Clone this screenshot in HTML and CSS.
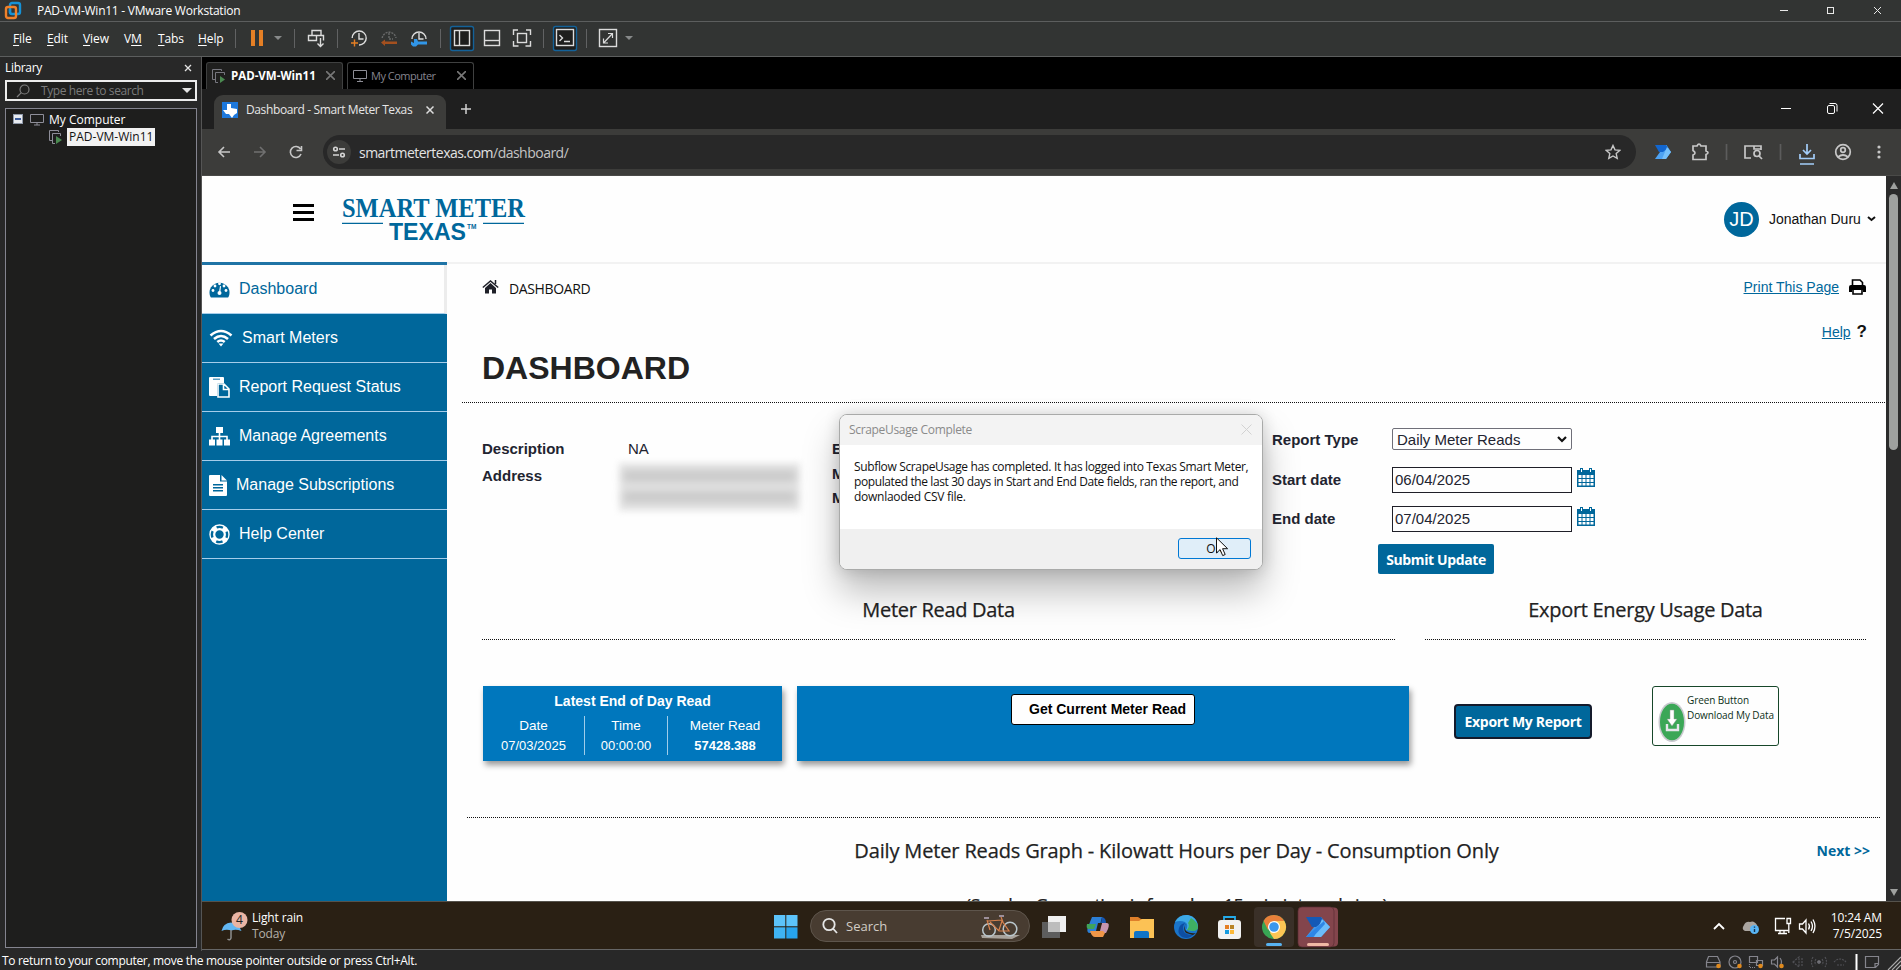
FILE: index.html
```html
<!DOCTYPE html>
<html lang="en">
<head>
<meta charset="utf-8">
<title>PAD-VM-Win11 - VMware Workstation</title>
<link rel="stylesheet" href="styles.css">
</head>
<body>
<header class="titlebar">
  <svg class="vm-logo" width="18" height="20" viewBox="0 0 18 20" fill="none" stroke-width="2.4"><rect x="6" y="2" width="10" height="11" rx="2" stroke="#1592d6"/><rect x="2" y="6" width="10" height="11" rx="2" stroke="#f0812a"/><path d="M6 8v4" stroke="#1592d6"/></svg>
  <span class="app-title">PAD-VM-Win11 - VMware Workstation</span>
  <svg class="win-ctl" width="120" height="20" viewBox="0 0 120 20" fill="none" stroke="#e8e8e8"><path d="M8 9.500h8"/><rect x="55.500" y="6.500" width="6" height="6"/><path d="M102 6l7 7M109 6l-7 7"/></svg>
</header>
<nav class="menubar">
  <span class="menu m-file"><u>F</u>ile</span><span class="menu m-edit"><u>E</u>dit</span><span class="menu m-view"><u>V</u>iew</span><span class="menu m-vm">V<u>M</u></span><span class="menu m-tabs"><u>T</u>abs</span><span class="menu m-help"><u>H</u>elp</span>
  <svg class="tools" width="420" height="34" viewBox="230 22 420 34" fill="none" stroke="#dcdcdc" stroke-width="1.400">
    <g stroke="#616263" stroke-width="1"><path d="M235.500 29v19M294.500 29v19M337.500 29v19M440.500 29v19M543.500 29v19M586.500 29v19"/></g>
    <path d="M251 30h4v16h-4zM259 30h4v16h-4z" fill="#e57f25" stroke="none"/>
    <path d="M274 36h8l-4 4z" fill="#87898a" stroke="none"/><path d="M625 36h8l-4 4z" fill="#87898a" stroke="none"/>
    <path d="M312 30.500h9v5h-9zM308.500 35.500h8v5h-8zM316.500 35.500h7v5M320.500 38v8M317.500 43.500l3 3l3-3"/>
    <path d="M352.200 38A7 7 0 1 1 359 45M359 33v6h4.500"/><path d="M351 43h7M354.500 39.500v7" stroke="#e57f25"/>
    <path d="M382.200 38A7 7 0 0 1 396 38M389 33v6h4" stroke="#686969" stroke-dasharray="2 1"/><path d="M381 42.500l4-3v2h12v2.500h-12v2z" fill="#a4501f" stroke="none"/>
    <path d="M412 39a7 7 0 1 1 14 0M419 33v6h4.500"/><path d="M411 41.500l3 1.500v-4h3l1 2.500h9v3h-9l-2 2h-3l-2-2z" fill="#3196e8" stroke="none"/>
    <rect x="450.500" y="26.500" width="23" height="24" rx="2" fill="#1e1e1d" stroke="#146299"/><rect x="454.500" y="30.500" width="15" height="15"/><path d="M459.500 30v16"/>
    <rect x="484.500" y="30.500" width="15" height="15"/><path d="M484 40.500h16"/>
    <path d="M518 30h-4.500v5M526 30h4.500v5M513.500 41v5h5M530.500 41v5h-5"/><rect x="517.500" y="33.500" width="9" height="9"/>
    <rect x="553.500" y="26.500" width="23" height="24" rx="2" fill="#1e1e1d" stroke="#146299"/><rect x="556.500" y="29.500" width="17" height="16"/><path d="M559.500 35l3 3l-3 3M564 41.500h6"/>
    <rect x="599.500" y="29.500" width="17" height="17"/><path d="M608 33.500h4.500v4.500M603.500 38.500v4.500h4.500M612 34L604 42.500" stroke-width="1.200"/>
  </svg>
</nav>
<div class="workspace">
  <aside class="library">
    <div class="lib-head"><span>Library</span><svg width="8" height="8" viewBox="0 0 8 8" stroke="#e4e4e4" stroke-width="1.300"><path d="M1 1l6 6M7 1L1 7"/></svg></div>
    <div class="lib-search"><svg width="14" height="14" viewBox="0 0 14 14" fill="none" stroke="#7d7d7d" stroke-width="1.200"><circle cx="8.500" cy="5.500" r="4.500"/><path d="M5.300 8.700L1 13"/></svg><span>Type here to search</span><i class="caret"></i></div>
    <div class="tree">
      <div class="node"><b class="minus"></b><svg width="16" height="13" viewBox="0 0 16 13" fill="none" stroke="#8e8e99"><path d="M1.500 1.500h13v8h-13zM8 10v2M5 12h6"/></svg><span>My Computer</span></div>
      <div class="node child"><svg width="14" height="14" viewBox="0 0 14 14" fill="none" stroke="#8e8e99"><path d="M3 10.500H.5V.5h9V2"/><path d="M6 13.500H3.500v-10h8V6"/><path d="M7 6l6 4l-6 4z" fill="#4b8a51" stroke="none"/></svg><span class="selected">PAD-VM-Win11</span></div>
    </div>
  </aside>
  <main class="guest">
    <div class="vmtabs">
      <div class="vmtab active"><svg width="14" height="14" viewBox="0 0 14 14" fill="none" stroke="#77777f"><path d="M3 10.500H.5V.5h9V2"/><path d="M6 13.500H3.500v-10h9V6"/><path d="M8 7l5 3.500l-5 3.500z" fill="#4b8a51" stroke="none"/></svg><span>PAD-VM-Win11</span><svg width="9" height="9" viewBox="0 0 9 9" stroke="#777" stroke-width="1.600"><path d="M0 0l9 9M9 0L0 9"/></svg></div>
      <div class="vmtab"><svg width="14" height="12" viewBox="0 0 14 12" fill="none" stroke="#8e8e96"><path d="M.5 .5h13v8H.5zM7 9v2M4 11.500h6"/></svg><span>My Computer</span><svg width="9" height="9" viewBox="0 0 9 9" stroke="#777" stroke-width="1.600"><path d="M0 0l9 9M9 0L0 9"/></svg></div>
    </div>
    <div class="strip">
      <div class="ctab"><svg width="16" height="16" viewBox="0 0 16 16"><path fill="#1d78dc" d="M0 0h16v16H0z"/><path fill="#fff" d="M5 2h4v4l6 1v4l-3 2-2 3-3-4-3 0-3-4h4z"/></svg><span>Dashboard - Smart Meter Texas</span><svg width="8" height="8" viewBox="0 0 8 8" stroke="#ddd" stroke-width="1.500"><path d="M.5 .5l7 7M7.500 .5l-7 7"/></svg></div>
      <svg class="plus" width="10" height="10" viewBox="0 0 10 10" stroke="#d2d2d2" stroke-width="1.500"><path d="M5 0v10M0 5h10"/></svg>
      <svg class="cctl" width="110" height="20" viewBox="0 0 110 20" fill="none" stroke="#fff"><path d="M1 9.500h10"/><rect x="47.500" y="6.500" width="7" height="8" rx="1.500"/><path d="M49.500 4.500h5.500q2 0 2 2v6"/><path d="M93 4.500l10 10M103 4.500l-10 10" stroke-width="1.200"/></svg>
    </div>
    <div class="ctoolbar">
      <svg class="nav" width="90" height="20" viewBox="216 142 90 20" fill="none" stroke="#c7c7c7" stroke-width="1.600"><path d="M230 152h-11M224 147l-5 5l5 5"/><path d="M254 152h11M260 147l5 5l-5 5" stroke="#707070"/><path d="M300.500 149a5.500 5.500 0 1 0 .5 5M301.500 146v4.500h-5"/></svg>
      <div class="omni"><div class="site"><svg width="14" height="14" viewBox="0 0 14 14" fill="none" stroke="#d5d5d5" stroke-width="1.600"><circle cx="3.500" cy="4" r="1.800"/><path d="M7 4h6M1 10h6"/><circle cx="10.500" cy="10" r="1.800"/></svg></div><span class="url"><span class="host">smartmetertexas.com</span><span class="path">/dashboard/</span></span>
      <svg class="star" width="16" height="16" viewBox="0 0 16 16" fill="none" stroke="#c7c7c7" stroke-width="1.400"><path d="M8 1.500l2 4.400 4.700.5-3.500 3.200 1 4.800L8 12l-4.200 2.400 1-4.800L1.300 6.400 6 5.900z"/></svg></div>
      <svg class="ext" width="245" height="30" viewBox="1650 137 245 30" fill="none" stroke="#c7c7c7" stroke-width="1.700">
        <path d="M1665 145h1.500l4.500 7l-5 7h-11l5-7z" fill="#4ea3f3" stroke="none"/><path d="M1655 145h11l2 3l-5 4h-4z" fill="#1266cf" stroke="none"/><path d="M1667 147l4 5l-5 7h-4z" fill="#76c1fb" stroke="none"/>
        <path d="M1693 146h4q2-4 4 0h5v5q4 1.500 0 3.500v5h-13v-4.500q4-2 0-4.500z"/>
        <path d="M1726.500 144v16M1780.500 144v16" stroke="#5c5c5c"/>
        <path d="M1751 158h-6v-12h16v4M1754 146v3h7"/><circle cx="1757" cy="153.500" r="3"/><path d="M1759 156l3 3"/>
        <path d="M1807 144v9M1803 150l4 4l4-4M1800 154v4.500h14v-4.500M1800 164h14" stroke="#a3cdf9"/>
        <circle cx="1843" cy="152" r="7.300"/><circle cx="1843" cy="150" r="2.300"/><path d="M1838 157q5-4 10 0"/>
        <g fill="#c7c7c7" stroke="none"><circle cx="1879" cy="147" r="1.600"/><circle cx="1879" cy="152" r="1.600"/><circle cx="1879" cy="157" r="1.600"/></g>
      </svg>
    </div>
    <div class="viewport">
      <div class="page">
        <div class="site-head">
          <svg class="burger" width="21" height="18" viewBox="0 0 21 18"><path d="M0 0h21v3H0zM0 7h21v3H0zM0 14h21v3H0z"/></svg>
          <svg class="brand" width="186" height="46" viewBox="342 196 186 46"><g fill="#00679b"><text x="342" y="217" class="brand-a" textLength="183" lengthAdjust="spacingAndGlyphs">SMART METER</text><text x="389" y="240" class="brand-b" textLength="77" lengthAdjust="spacingAndGlyphs">TEXAS</text><text x="467" y="229" class="brand-c">TM</text><path d="M342 222.700h41v1.300h-41zM483 222.700h41v1.300h-41z"/></g></svg>
          <div class="user"><div class="avatar">JD</div><span class="uname">Jonathan Duru</span><svg width="9" height="6" viewBox="0 0 9 6" fill="none" stroke="#111" stroke-width="2"><path d="M1 1l3.500 3L8 1"/></svg></div>
        </div>
        <div class="site-body">
          <nav class="side">
            <a class="item on"><svg width="21" height="18" viewBox="0 0 21 18"><path fill="#00679b" d="M1.500 17A10 10 0 1 1 19.500 17Q19 17.500 18.500 17.500H2.500Q2 17.500 1.500 17z"/><g fill="#fff"><circle cx="4" cy="10.500" r="1.400"/><circle cx="6" cy="6" r="1.400"/><circle cx="10.500" cy="3.800" r="1.400"/><circle cx="15" cy="6" r="1.400"/><circle cx="17" cy="10.500" r="1.400"/><circle cx="10.500" cy="13" r="2"/><path d="M10 12l1-6 1 .3-.7 6z"/></g></svg><span>Dashboard</span></a>
            <a class="item"><svg width="24" height="18" viewBox="0 0 24 18" fill="none" stroke="#fff" stroke-width="2.600"><path d="M1.500 6.500q10.500-9 21 0M5 10q7-6 14 0M8.300 13q3.700-3 7.400 0"/><path d="M9.500 14.500h5L12 17.500z" fill="#fff" stroke="none"/></svg><span>Smart Meters</span></a>
            <a class="item"><svg width="21" height="21" viewBox="0 0 21 21"><path fill="#fff" d="M1 0h13q1 0 1 1v5h-5q-2 0-2 2v11H1q-1 0-1-1V1q0-1 1-1z"/><path fill="#5f9fc2" d="M4 1.500h7V3H4z"/><path d="M9 7h6l5 5v8H9zM14.500 7v5.500H20" fill="#00679b" stroke="#fff" stroke-width="1.600"/></svg><span>Report Request Status</span></a>
            <a class="item"><svg width="21" height="19" viewBox="0 0 21 19" fill="#fff"><path d="M7 0h7v6H7zM0 12.500h6v6H0zM7.500 12.500h6v6h-6zM15 12.500h6v6h-6z"/><path d="M3 13V9.500h15V13M10.500 5v8" fill="none" stroke="#fff" stroke-width="1.600"/></svg><span>Manage Agreements</span></a>
            <a class="item"><svg width="18" height="21" viewBox="0 0 18 21"><path fill="#fff" d="M1 0h10v6.500h7V20q0 1-1 1H1q-1 0-1-1V1q0-1 1-1zM12.500 0L18 5.500h-5.500z"/><path fill="#00679b" d="M4 9h10v1.400H4zM4 12h10v1.400H4zM4 15h10v1.400H4z"/></svg><span>Manage Subscriptions</span></a>
            <a class="item"><svg width="21" height="21" viewBox="0 0 21 21" fill="none"><circle cx="10.500" cy="10.500" r="7.200" stroke="#fff" stroke-width="6"/><circle cx="10.500" cy="10.500" r="7.600" stroke="#00679b" stroke-width="2.400" stroke-dasharray="6.500 5.440" stroke-dashoffset="3.200"/></svg><span>Help Center</span></a>
          </nav>
          <section class="content">
            <div class="crumbs"><svg width="17" height="14" viewBox="0 0 17 14" fill="#1f2028"><path d="M8.500 3L14 8v5.500H10V9.500H7v4H3V8z"/><path d="M.8 7.500L8.500 1l7.700 6.500M13.500 0v4" fill="none" stroke="#1f2028" stroke-width="1.500"/></svg><span class="crumb">DASHBOARD</span>
              <span class="print"><a class="lnk">Print This Page</a><svg width="17" height="16" viewBox="0 0 17 16"><path d="M3.500 6V1h7.500l2.500 2.500V6" fill="none" stroke="#000" stroke-width="1.600"/><path d="M2 6h13q2 0 2 2v5h-3v-2H3v2H0V8q0-2 2-2z"/><path d="M4 11v4h9v-4" fill="none" stroke="#000" stroke-width="1.600"/></svg></span></div>
            <div class="helprow"><a class="lnk">Help</a><b>?</b></div>
            <h1>DASHBOARD</h1>
            <div class="dots d1"></div>
            <div class="details">
              <dl class="meta"><div><dt>Description</dt><dd>NA</dd></div><div><dt>Address</dt><dd><span class="redacted"><i></i><i></i></span></dd></div></dl>
              <dl class="ids"><dt>E</dt><dt>M</dt><dt>M</dt></dl>
              <form class="report">
                <div class="fr r1"><label>Report Type</label><div class="select"><span>Daily Meter Reads</span><svg width="10" height="7" viewBox="0 0 10 7" fill="none" stroke="#111" stroke-width="2.200"><path d="M1 1l4 4 4-4"/></svg></div></div>
                <div class="fr r2"><label>Start date</label><div class="input"><span>06/04/2025</span></div><svg class="cal" width="18" height="19" viewBox="0 0 18 19"><path fill="#00679b" d="M0 2h18v17H0zM3 0h3v4H3zM12 0h3v4h-3z"/><path fill="#fff" d="M1.500 7h3v3h-3zM5.500 7h3v3h-3zM9.500 7h3v3h-3zM13.500 7h3v3h-3zM1.500 11h3v3h-3zM5.500 11h3v3h-3zM9.500 11h3v3h-3zM13.500 11h3v3h-3zM1.500 15h3v2.500h-3zM5.500 15h3v2.500h-3zM9.500 15h3v2.500h-3zM13.500 15h3v2.500h-3zM4 1h1v3H4zM13 1h1v3h-1z"/></svg></div>
                <div class="fr r3"><label>End date</label><div class="input"><span>07/04/2025</span></div><svg class="cal" width="18" height="19" viewBox="0 0 18 19"><path fill="#00679b" d="M0 2h18v17H0zM3 0h3v4H3zM12 0h3v4h-3z"/><path fill="#fff" d="M1.500 7h3v3h-3zM5.500 7h3v3h-3zM9.500 7h3v3h-3zM13.500 7h3v3h-3zM1.500 11h3v3h-3zM5.500 11h3v3h-3zM9.500 11h3v3h-3zM13.500 11h3v3h-3zM1.500 15h3v2.500h-3zM5.500 15h3v2.500h-3zM9.500 15h3v2.500h-3zM13.500 15h3v2.500h-3zM4 1h1v3H4zM13 1h1v3h-1z"/></svg></div>
                <div class="submit">Submit Update</div>
              </form>
            </div>
            <div class="heads"><h2 class="h-read"><span>Meter Read Data</span></h2><h2 class="h-export"><span>Export Energy Usage Data</span></h2></div>
            <div class="cards">
              <div class="card latest"><div class="ctitle">Latest End of Day Read</div><div class="cols"><div class="c1"><span>Date</span><span>07/03/2025</span></div><div class="c2"><span>Time</span><span>00:00:00</span></div><div class="c3"><span>Meter Read</span><b>57428.388</b></div></div></div>
              <div class="card current"><div class="getread">Get Current Meter Read</div></div>
              <div class="export">Export My Report</div>
              <div class="green"><svg width="28" height="42" viewBox="0 0 28 42"><ellipse cx="14" cy="21" rx="13.500" ry="20" fill="#c9c9cf"/><ellipse cx="14" cy="21" rx="12" ry="18.300" fill="#3ba757"/><path d="M12 9h4v9h3l-5 7-5-7h3z" fill="#fff" stroke="#8e9a92" stroke-width=".5"/><path d="M9 23v6h11v-6" fill="none" stroke="#e6e6ec" stroke-width="2.400"/></svg><div class="gtext"><span class="g1">Green Button</span><span class="g2">Download My Data</span></div></div>
            </div>
            <div class="dots d2"></div>
            <div class="graph"><h2><span>Daily Meter Reads Graph - Kilowatt Hours per Day - Consumption Only</span></h2><b class="next">Next &gt;&gt;</b></div>
            <div class="note"><span>(Surplus Generation is found on 15 min interval view)</span></div>
          </section>
        </div>
      </div>
      <div class="scroll"><i class="up"></i><i class="thumb"></i><i class="down"></i></div>
    </div>
    <footer class="taskbar">
      <div class="weather"><svg width="30" height="32" viewBox="220 906 30 32"><path d="M221.500 927Q223 919 231 918.500Q239 919 241.500 927Q236 925 231.500 926.500Q226 925 221.500 927z" fill="#62b7f3"/><path d="M231 926v8q-1 3-3.500 1" fill="none" stroke="#8d8d8d" stroke-width="1.500"/><circle cx="239.500" cy="916" r="8" fill="#eab5a4"/><text x="239.500" y="920.200" class="badge" text-anchor="middle">4</text></svg><div class="wtext"><span>Light rain</span><span class="dim">Today</span></div></div>
      <svg class="start" width="24" height="24" viewBox="0 0 24 24"><path fill="#5cc3fa" d="M0 0h11.300v11.300H0zM12.300 0H23.500v11.300H12.300z"/><path fill="#3fb3f3" d="M0 12.300h11.300V23.500H0z"/><path fill="#27a3ec" d="M12.300 12.300H23.500V23.500H12.300z"/></svg>
      <div class="search"><svg width="16" height="18" viewBox="0 0 16 18" fill="none" stroke="#e6e6e6" stroke-width="1.800"><circle cx="7" cy="7.500" r="5.700"/><path d="M11 11.500l4 4.500"/></svg><span>Search</span><svg class="bike" width="44" height="26" viewBox="982 914 44 26" fill="none"><path d="M983 936h39l-8 4-30-1z" fill="#a9a39c"/><g stroke="#b9c6cc" stroke-width="1.500"><circle cx="991" cy="931" r="6.300"/><circle cx="1012" cy="930" r="6.800"/></g><path d="M989 921l3 10M990 922l14-1M992 923l9 9h10l-7-10l-3 9M1003 918l2 5" stroke="#d8824e" stroke-width="1.200"/><path d="M1001 917h5M986 919h5" stroke="#9c8f9a" stroke-width="2"/></svg></div>
      <svg class="apps" width="310" height="46" viewBox="1036 902 310 46">
        <path fill="#5d5d5d" d="M1042 921h18v16h-18z"/><path fill="#f0f0f0" d="M1048 915h18v16h-18z"/><path fill="#bdbdbd" d="M1048 921h12v10h-12z"/>
        <path d="M1092 916h10l-2 8-2 8h-8q-4 0-2-6z" fill="#2c7fd6"/><path d="M1087 923h9l-2 5h-6q-2-1-1-5z" fill="#3fa35a"/><path d="M1102 916q4 1 4 6h-5z" fill="#1456b5"/><path d="M1102 922h5q3 0 1 6l-2 4h-9z" fill="#c695b0"/><path d="M1090 930h13l2 2-2 4h-8q-3 0-5-6z" fill="#ef9648"/><path d="M1096 930l2-8h4l-2 8z" fill="#2a2014"/>
        <path d="M1130 916h8l3 2h12v5h-23z" fill="#df7f2a"/><path d="M1130 920h9l3-2h12v19h-24z" fill="#fcc255"/><path d="M1134 937v-5q0-2 2-2h11q2 0 2 2v5z" fill="#1174c6"/>
        <circle cx="1186" cy="926" r="12" fill="#1a74c9"/><path d="M1175 921q4-8 13-7q10 2 10 13l-4 3-8-1q3-5-1-8-5-2-10 0z" fill="#3da9e6"/><path d="M1191 917q7 4 7 10-1 3-5 3l-6-1q3-4 1-7z" fill="#3fb163"/><path d="M1185 922q-4 5 0 10 4 3 9 1-5 6-12 3-5-3-3-9 1-4 6-5z" fill="#0d4ea3"/><path d="M1187 922q-4 3-1 8 4 3 10 2l-3 2-7-2q-4-5 1-10z" fill="#2a2014"/>
        <path d="M1224 921v-5h11v5" fill="none" stroke="#24abe9" stroke-width="1.800"/><rect x="1218" y="919" width="23" height="19" rx="3" fill="#f2f2f2"/><path fill="#e57f25" d="M1225 924h4v4h-4z"/><path fill="#b88428" d="M1230 924h4v4h-4z"/><path fill="#159be0" d="M1225 929h4v4h-4z"/><path fill="#fcb93a" d="M1230 929h4v4h-4z"/>
        <rect x="1254" y="906" width="40" height="40" rx="4" fill="#3a3028"/><circle cx="1274" cy="926" r="12" fill="#38a554"/><path d="M1284.400 920A12 12 0 0 1 1274 938L1270 932L1274 920z" fill="#fdc554"/><path d="M1263.600 920A12 12 0 0 1 1284.400 920H1274L1268 929z" fill="#e8803a"/><circle cx="1274" cy="926" r="6" fill="#fff"/><circle cx="1274" cy="926" r="4.800" fill="#3a97ee"/><rect x="1266" y="942" width="16" height="3" rx="1.500" fill="#58b2f0"/>
        <rect x="1302" y="906.500" width="36" height="39" rx="4" fill="#83454c"/><rect x="1298" y="906" width="36" height="40" rx="4" fill="#83454c" stroke="#5a2c33" stroke-width=".7"/><path d="M1320 916h1l9 10-9 10h-15l8-10z" fill="#3f96ec"/><path d="M1306 916h15l3 4-8 6h-4z" fill="#1459b6"/><path d="M1322 918l8 8-9 10h-7z" fill="#6cbcfa"/><path d="M1324 920l-18 16h7l12-13z" fill="#2e86e6"/><rect x="1307" y="942" width="22" height="3" rx="1.500" fill="#f0b8a4"/>
      </svg>
      <svg class="tray" width="110" height="24" viewBox="1710 914 110 24" fill="none" stroke="#fff" stroke-width="1.300"><path d="M1714 929l5-5l5 5" stroke-width="1.800"/><path d="M1745 931q-4-2-1-6q2-4 6-3q4-2 7 3q2 4-1 6z" fill="#aaa5a0" stroke="none"/><circle cx="1754.500" cy="929.500" r="4.500" fill="#58b5f5" stroke="none"/><path d="M1754.500 929v3M1754.500 926.500v1.200" stroke="#17324d" stroke-width="1.400"/><path d="M1785 918.500h-9.500v12h13M1778 933.500h9M1780 931v2M1784 931v2"/><path d="M1787 918.500h3.500v5h-3.500zM1788.800 924v9"/><path d="M1799.500 924h3l3.500-4v13l-3.500-4h-3zM1808.500 923.500q2 3 0 6M1811 921.500q3 5 0 9.500M1813 919.500q4 7 0 13.500"/></svg>
      <div class="clock"><span>10:24 AM</span><span>7/5/2025</span></div>
    </footer>
  </main>
</div>
<div class="status"><span>To return to your computer, move the mouse pointer outside or press Ctrl+Alt.</span>
  <svg width="200" height="19" viewBox="1701 951 200 19" fill="none" stroke="#85858d" stroke-width="1.200"><path d="M1706.500 962l2-5.500h9l2.500 5.500v5h-13.500zM1706.500 962.500h13"/><circle cx="1735" cy="962" r="6"/><circle cx="1735" cy="962" r="1.500"/><path d="M1749.500 956.500h8v6h-8zM1756.500 960.500h6v5h-6z"/><path d="M1749.500 964v3.500h6" stroke-dasharray="1 1"/><path d="M1771.500 960h3l3-3v10l-3-3h-3zM1780 958q3 4 0 8"/><g stroke="#515156" stroke-dasharray="2 1"><path d="M1793 962l6-5v10zM1802 958v8"/><path d="M1813 957q-3 5 0 10M1825 957q3 5 0 10M1816 959q-2 3 0 6M1822 959q2 3 0 6"/><path d="M1834 962q6-6 12 0M1837 965h7"/></g><circle cx="1819" cy="962" r="1.200"/><path d="M1856.500 954v16" stroke="#fff" stroke-width="2"/><path d="M1865.500 956.500h13v8l-3 3h-10zM1875 967v-3.500h4"/><g fill="#e08a1e" stroke="none"><circle cx="1718.500" cy="966" r="2.300"/><circle cx="1739.500" cy="966" r="2.300"/><circle cx="1760.500" cy="966" r="2.300"/><circle cx="1781.500" cy="966" r="2.300"/></g><path d="M1888 970l13-13M1892 970l9-9M1896 970l5-5" stroke="#aaa"/></svg>
</div>
<div class="dialog">
  <div class="dlg-head"><span>ScrapeUsage Complete</span><svg width="11" height="11" viewBox="0 0 11 11" stroke="#d2d2d2"><path d="M.5 .5l10 10M10.500 .5l-10 10"/></svg></div>
  <div class="dlg-body"><p class="p1">Subflow ScrapeUsage has completed. It has logged into Texas Smart Meter,</p><p class="p2">populated the last 30 days in Start and End Date fields, ran the report, and</p><p class="p3">downlaoded CSV file.</p></div>
  <div class="dlg-foot"><div class="ok">OK</div></div>
</div>
<svg class="cursor" width="13" height="20" viewBox="0 0 13 20"><path d="M.5 .8V16l3.600-3.400 2.600 6 2.500-1.100-2.600-5.800h5z" fill="#fff" stroke="#111"/></svg>
</body>
</html>
```
FILE: styles.css
```css
*{box-sizing:border-box;margin:0;padding:0}
body{width:1901px;height:970px;overflow:hidden;background:#282828;display:flex;flex-direction:column;font-family:"Open Sans","Noto Sans",sans-serif;font-size:12px;color:#fff;position:relative;white-space:nowrap}
svg{display:block;flex:none}
.titlebar{height:22px;background:#323433;border-bottom:1px solid #5c5e5e;display:flex;align-items:center;padding-left:4px}
.app-title{margin-left:15px;letter-spacing:-.24px;flex:1;padding-bottom:1px}
.win-ctl{margin-right:9px}
.menubar{height:35px;background:#323433;border-bottom:1px solid #5c5e5e;display:flex;align-items:center;padding-left:13px}
.menu{letter-spacing:-.1px;padding-bottom:2px}
.menu u{text-underline-offset:2px}
.m-file{width:34px}.m-edit{width:36px}.m-view{width:41px}.m-vm{width:34px}.m-tabs{width:40px}.m-help{width:32px}
.workspace{height:894px;display:flex}
.library{width:202px;border-right:1px solid #555;padding:0 4px 3px 5px;display:flex;flex-direction:column;background:#282828}
.lib-head{height:23px;display:flex;justify-content:space-between;align-items:center;padding:0 5px 2px 0;letter-spacing:-.3px}
.lib-search{height:21px;border:2px solid #ececec;background:#1f1f1e;display:flex;align-items:center;padding:0 3px 0 9px;color:#7b7b7b;margin-bottom:7px}
.lib-search span{margin-left:11px;flex:1;letter-spacing:-.42px}
.caret{border:5px solid transparent;border-top:5px solid #e4e4e4;border-bottom:0}
.tree{flex:1;border:1px solid #84848f;background:#1e1e1d;padding-top:1px}
.node{height:18px;display:flex;align-items:center;padding-left:7px}
.node svg{margin:0 4px 0 6px}
.minus{width:10px;height:10px;background:#e8ebf0;border:1px solid #8f99a9;display:flex;align-items:center;justify-content:center}
.minus::after{content:"";width:6px;height:2px;background:#3b5c9c}
.node.child{padding-left:37px}
.node.child svg{margin-right:4px}
.selected{background:#f2f2f2;color:#111;height:18px;line-height:17px;padding:0 2px}
.guest{flex:1;display:flex;flex-direction:column;min-width:0}
.vmtabs{height:32px;background:#000;display:flex;padding:5px 0 0 4px;gap:4px}
.vmtab{width:137px;border:1px solid #3f4040;border-bottom:0;border-radius:3px 3px 0 0;display:flex;align-items:center;padding:0 7px 1px 5px;color:#85858f}
.vmtab span{flex:1;margin-left:5px;font-size:11.500px}
.vmtab:nth-child(2){width:127px}
.vmtab:nth-child(2) span{font-size:11px;letter-spacing:-.5px;margin-left:4px}
.vmtab.active{background:#1f1f1e;color:#fff;font-weight:700}
.strip{height:40px;background:#1f1f1f;display:flex;align-items:center;padding-left:12px}
.ctab{width:232px;height:34px;margin-top:6px;background:#3c3c3a;border-radius:9px 9px 0 0;display:flex;align-items:center;padding:0 12px 5px 8px;color:#e6e6e6}
.ctab span{flex:1;margin-left:8px;letter-spacing:-.38px}
.plus{margin-left:15px}
.cctl{margin-left:auto;margin-right:11px}
.ctoolbar{height:47px;background:#3c3c3a;border-bottom:1px solid #4a4a48;display:flex;align-items:center;padding-left:14px}
.omni{margin-left:17px;width:1313px;height:34px;border-radius:17px;background:#282828;display:flex;align-items:center;padding:0 15px 0 4px}
.site{width:24px;height:24px;border-radius:50%;background:#3c3c3a;display:grid;place-items:center}
.url{margin-left:8px;font-size:14px;color:#e3e3e3;letter-spacing:-.52px}
.path{color:#c4c4c4}
.star{margin-left:auto}
.ext{margin-left:14px}
.viewport{height:725px;display:flex;background:#fff}
.page{flex:1;display:flex;flex-direction:column;background:#fefefe;color:#222430;overflow:hidden;font-family:"Liberation Sans",Arial,sans-serif}
.site-head{height:86px;flex:none;display:flex;align-items:flex-start;padding:20px 10px 0 91px}
.burger{margin-top:8px}
.brand{margin-left:28px;overflow:visible}
.brand-a{font:700 27px "Liberation Serif",serif}
.brand-b{font:700 24px "Liberation Sans",sans-serif}
.brand-c{font:700 6.500px "Liberation Sans",sans-serif}
.user{margin-left:auto;display:flex;align-items:center;height:36px;margin-top:5px}
.avatar{width:35px;height:35px;border-radius:50%;background:#00679b;color:#fff;font-size:20px;display:grid;place-items:center}
.uname{margin:0 6px 0 10px;font-size:14px;color:#111;width:92px}
.site-body{height:639px;display:flex}
.side{width:245px;background:#00679b;border-top:3px solid #1f74a6;font-size:16px}
.item{height:49px;border-bottom:1px solid #a5cdea;color:#fff;display:flex;align-items:center;padding-left:7px}
.item span{margin-left:9px}
.item.on{background:#fefefe;color:#00679b;border-right:3px solid #ececec}
.content{width:1439px;border-top:2px solid #f2f2f2;display:flex;flex-direction:column;overflow:hidden;font-size:15px}
.content>*{flex:none}
.crumbs{height:44px;display:flex;align-items:center;padding:2px 20px 0 35px}
.crumb{margin-left:10px;padding-top:2px;font:14px "Open Sans","Noto Sans",sans-serif;color:#111;letter-spacing:-.36px}
.print{margin-left:auto;display:flex;align-items:center;gap:10px}
.lnk{color:#00679b;text-decoration:underline;font-size:14px}
.helprow{height:48px;display:flex;align-items:center;justify-content:flex-end;padding-right:19px;gap:6px;color:#111}
.helprow b{font-size:17px}
h1{font-size:32px;line-height:36px;margin:-6px 0 0 35px;height:52px;color:#222}
.dots{height:1px;background:repeating-linear-gradient(90deg,#111 0 1px,transparent 1px 2px)}
.d1{margin:0 0 0 15px}
.details{height:184px;display:flex;padding-left:35px}
.details dt,.details label{font-weight:700}
.meta{width:350px;padding-top:37px}
.meta div{display:flex;height:27px;align-items:flex-start}
.meta dt{width:146px}
.redacted{display:flex;flex-direction:column;gap:9px;width:181px;height:48px;padding:7px 4px;margin:-4px 0 0 -9px;background:#e6e6e6;filter:blur(3px)}
.redacted i{height:12px;background:#c8c8c8;filter:blur(3px)}
.ids{width:440px;padding:37px 0 0}
.ids dt{height:24.500px}
.report{padding-top:25px;width:330px}
.fr{display:flex;align-items:center}
.fr label{width:120px}
.r1{height:22px;margin-bottom:16px}
.r2,.r3{height:27px;margin-bottom:12px}
.select{width:180px;height:22px;border:1px solid #6f6f79;border-radius:2px;display:flex;align-items:center;justify-content:space-between;padding:0 4px 0 4px}
.input{width:180px;height:26px;border:1px solid #1f1f28;padding-left:2px;line-height:24px}
.cal{margin-left:5px;margin-top:-4px}
.submit{margin:1px 0 0 106px;width:116px;height:30px;border-radius:2px;background:#00679b;color:#fff;font:700 14px/32px "Open Sans","Noto Sans",sans-serif;text-align:center;letter-spacing:-.38px}
.heads{height:53px;display:flex;padding-left:35px;gap:30px}
h2 span,.note span{-webkit-text-stroke:.25px #222}
.heads h2{font:500 20px/45px "Open Sans","Noto Sans",sans-serif;text-align:center;height:53px;background:repeating-linear-gradient(90deg,#111 0 1px,transparent 1px 2px) 0 100%/100% 1px no-repeat;color:#222;letter-spacing:-.3px}
.h-read{width:913px}
.h-export{width:441px}
.cards{height:131px;margin-top:46px;margin-bottom:0;display:flex;padding-left:36px;align-items:flex-start}
.card{height:75px;background:#0077bd;color:#fff;box-shadow:2px 4px 6px rgba(0,0,0,.4)}
.latest{width:299px;font-size:13px}
.ctitle{font-weight:700;text-align:center;height:30px;line-height:30px;font-size:14px}
.cols{display:flex;height:39px}
.cols>div{display:flex;flex-direction:column;text-align:center;line-height:20px}
.cols>div>:first-child{font-size:13.500px}
.c1{width:102px;border-right:1px solid #9fcdea}
.c2{width:83px;border-right:1px solid #9fcdea}
.c3{flex:1}
.current{width:612px;margin-left:15px;padding:8px 0 0 214px}
.getread{width:184px;height:31px;border:1px solid #000;border-radius:3px;background:#fefefe;color:#000;font-weight:700;font-size:14px;line-height:29px;padding-left:17px}
.export{margin:18px 0 0 45px;width:138px;height:35px;border:2px solid #141a2b;border-radius:4px;background:#00679b;color:#fff;font:700 14px/32px "Open Sans","Noto Sans",sans-serif;text-align:center;letter-spacing:-.3px}
.green{margin-left:60px;width:127px;height:60px;border:1px solid #17472a;border-radius:3px;display:flex;padding:14px 0 0 5px}
.gtext{display:flex;flex-direction:column;font:10px/15px "Open Sans","Noto Sans",sans-serif;color:#0c3018;margin:-8px 0 0 1px;letter-spacing:-.1px}
.d2{margin:0 5px 0 20px}
.graph{height:65px;position:relative;display:flex;align-items:center;justify-content:center}
.graph h2{font:500 20px/30px "Open Sans","Noto Sans",sans-serif;color:#222;margin-left:20px;letter-spacing:-.15px}
.next{position:absolute;right:16px;color:#00679b;font:700 14px "Open Sans","Noto Sans",sans-serif}
.note{font:500 18px/30px "Open Sans","Noto Sans",sans-serif;color:#222;text-align:center;padding-left:20px;margin-top:7px;letter-spacing:-.43px}
.scroll{width:15px;background:#2b2b2b;display:flex;flex-direction:column;align-items:center;padding:6px 0 5px}
.up{border:4.500px solid transparent;border-bottom:7px solid #9fa19f;border-top:0}
.down{border:4.500px solid transparent;border-top:7px solid #9fa19f;border-bottom:0;margin-top:auto}
.thumb{width:9px;height:256px;border-radius:5px;background:#9fa19f;margin-top:5px}
.taskbar{height:49px;background:#2a2014;border-top:1px solid #55524c;border-bottom:1px solid #666;display:flex;align-items:center}
.weather{display:flex;align-items:center;width:572px;padding-left:18px}
.badge{font:12px "Open Sans",sans-serif;fill:#222}
.wtext{display:flex;flex-direction:column;line-height:16px;margin-left:2px;letter-spacing:-.15px}
.dim{color:#b5b0aa}
.start{margin-top:2px}
.search{margin-left:12px;width:220px;height:32px;border-radius:16px;background:#483c31;border:1px solid #5e554c;display:flex;align-items:center;padding:0 5px 0 11px;font-size:13px;color:#d2cdc6}
.search span{margin-left:8px}
.bike{margin-left:auto}
.apps{margin-left:6px}
.tray{margin-left:364px}
.clock{display:flex;flex-direction:column;line-height:16px;text-align:right;margin-left:auto;padding-right:19px;letter-spacing:-.1px}
.status{height:19px;display:flex;justify-content:space-between;padding-left:2px;line-height:20px;letter-spacing:-.31px}
.dialog{position:absolute;left:839px;top:414px;width:424px;height:156px;border:1px solid #a9aaa9;border-radius:8px;background:#fff;color:#111;overflow:hidden;box-shadow:0 22px 36px rgba(0,0,0,.26),0 0 16px rgba(0,0,0,.16)}
.dlg-head{height:30px;background:#f3f3f3;display:flex;align-items:center;justify-content:space-between;padding:0 10px 2px 9px;color:#8a8a8a;letter-spacing:-.33px}
.dlg-body{height:84px;padding:14px 0 0 14px;line-height:15px}
.p1{letter-spacing:-.35px}
.p2{letter-spacing:-.4px}
.p3{letter-spacing:-.27px}
.dlg-foot{height:42px;background:#f0f0f0;padding:9px 11px;display:flex;justify-content:flex-end}
.ok{width:73px;height:21px;border:1px solid #0078d4;border-radius:3px;background:#e0eef9;text-align:center;line-height:19px}
.cursor{position:absolute;left:1216px;top:537px}
```
